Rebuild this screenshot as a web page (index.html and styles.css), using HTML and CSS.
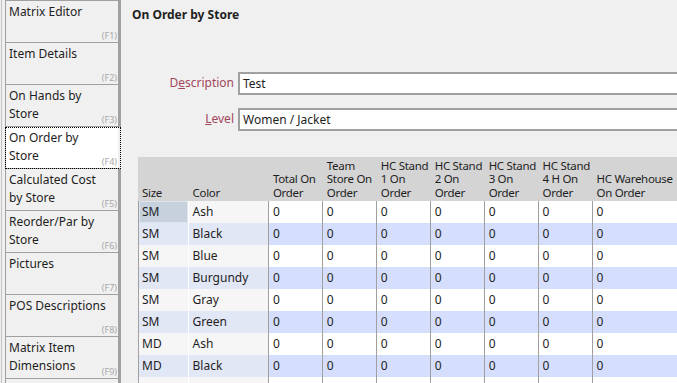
FILE: index.html
```html
<!DOCTYPE html>
<html lang="en">
<head>
  <meta charset="UTF-8">
  <title>On Order by Store</title>
  <link rel="stylesheet" href="styles.css">
</head>
<body>
  <div class="sidebar">
    <div class="tabs">
      <div class="tab">Matrix Editor<span class="key">(F1)</span></div>
      <div class="tab">Item Details<span class="key">(F2)</span></div>
      <div class="tab">On Hands by Store<span class="key">(F3)</span></div>
      <div class="tab active">On Order by Store<span class="key">(F4)</span></div>
      <div class="tab">Calculated Cost by Store<span class="key">(F5)</span></div>
      <div class="tab">Reorder/Par by Store<span class="key">(F6)</span></div>
      <div class="tab">Pictures<span class="key">(F7)</span></div>
      <div class="tab">POS Descriptions<span class="key">(F8)</span></div>
      <div class="tab">Matrix Item Dimensions<span class="key">(F9)</span></div>
      <div class="tab"></div>
    </div>
  </div>

  <div class="main">
    <h1 class="title">On Order by Store</h1>

    <div class="form">
      <label class="label">D<u>e</u>scription</label>
      <div class="field">Test</div>
      <label class="label"><u>L</u>evel</label>
      <div class="field">Women / Jacket</div>
    </div>

    <table class="grid">
      <colgroup>
        <col class="c-size"><col class="c-color">
        <col class="c-num"><col class="c-num"><col class="c-num"><col class="c-num">
        <col class="c-num"><col class="c-num"><col class="c-wide">
      </colgroup>
      <thead>
        <tr>
          <th>Size</th>
          <th>Color</th>
          <th>Total On Order</th>
          <th>Team Store On Order</th>
          <th>HC Stand 1 On Order</th>
          <th>HC Stand 2 On Order</th>
          <th>HC Stand 3 On Order</th>
          <th>HC Stand 4 H On Order</th>
          <th>HC Warehouse On Order</th>
        </tr>
      </thead>
      <tbody id="rows"></tbody>
    </table>
  </div>

  <script>
    const rows = [
      ['SM', 'Ash'], ['SM', 'Black'], ['SM', 'Blue'], ['SM', 'Burgundy'],
      ['SM', 'Gray'], ['SM', 'Green'], ['MD', 'Ash'], ['MD', 'Black']
    ];
    let html = '';
    rows.forEach(([size, color], i) => {
      html += `<tr><td class="key-cell${i === 0 ? ' selected' : ''}">${size}</td><td class="key-cell color">${color}</td>`;
      for (let c = 0; c < 7; c++) html += '<td>0</td>';
      html += '</tr>';
    });
    // partly hidden row below the fold
    html += '<tr><td class="key-cell"></td><td class="key-cell color"></td>' + '<td></td>'.repeat(7) + '</tr>';
    document.getElementById('rows').innerHTML = html;
  </script>
</body>
</html>
```

FILE: styles.css
```css
html, body {
  margin: 0;
  height: 383px;
  overflow: hidden;
}
body {
  display: flex;
  background: #f0f0f0;
  font-family: "Noto Sans", "Open Sans", sans-serif;
  font-size: 12px;
  color: #1e1e1e;
}
.sidebar {
  flex: none;
  width: 116px;
  margin-left: 1px;
  border-left: 1px solid #c4c4c4;
  padding-left: 3px;
}
.tabs {
  border-top: 1px solid #a0a0a0;
}
.tab {
  position: relative;
  height: 38px;
  padding: 2px 10px 1px 3px;
  line-height: 18px;
  border-left: 1px solid #a0a0a0;
  border-right: 3px solid #a0a0a0;
  border-bottom: 1px solid #a0a0a0;
}
.tab.active {
  background: #fff;
  border-right-color: #f0f0f0;
  outline: 1px dotted #000;
  outline-offset: -1px;
}
.key {
  position: absolute;
  right: 1px;
  bottom: 0;
  font-size: 9px;
  line-height: 12px;
  color: #a8a8a8;
}
.main {
  flex: 1;
  min-width: 0;
  overflow: hidden;
  padding: 6px 0 0 11px;
}
.title {
  margin: 0;
  font-size: 12px;
  line-height: 18px;
  font-weight: bold;
}
.form {
  display: grid;
  grid-template-columns: 102px 500px;
  column-gap: 4px;
  row-gap: 13px;
  align-items: center;
  margin-top: 48px;
}
.label {
  text-align: right;
  color: #a3465a;
  line-height: 16px;
  padding-bottom: 2px;
}
.field {
  height: 19px;
  line-height: 19px;
  padding-left: 3px;
  background: #fff;
  border: 2px solid #a0a0a0;
}
.grid {
  margin: 26px 0 0 6px;
  table-layout: fixed;
  width: 546px;
  border-collapse: separate;
  border-spacing: 0;
}
.c-size { width: 45px; }
.c-color { width: 73px; }
.c-num { width: 49px; }
.c-wide { width: 84px; }
.grid th {
  height: 42px;
  padding: 0 0 2px 4px;
  background: #d4d4d4;
  font-weight: normal;
  font-size: 11.5px;
  letter-spacing: -0.3px;
  text-align: left;
  vertical-align: bottom;
  line-height: 13.5px;
  border-left: 1px solid #d4d4d4;
}
.grid th:first-child {
  padding-left: 3px;
}
.grid td {
  height: 22px;
  padding: 0 0 0 4px;
  line-height: 22px;
  white-space: nowrap;
  background: #fff;
  border-left: 1px solid #a0a0a0;
}
.grid tbody tr:nth-child(even) td {
  background: #d5defc;
}
.grid td.key-cell {
  background: #f6f6f6;
  padding-left: 3px;
}
.grid td.color {
  border-left-color: #fff;
  padding-left: 4px;
}
.grid tbody tr:nth-child(even) td.key-cell {
  background: #e2e7f6;
}
.grid td.selected {
  background: #c6d1dd;
  box-shadow: inset 0 0 0 1px #dde4ec;
}
```
